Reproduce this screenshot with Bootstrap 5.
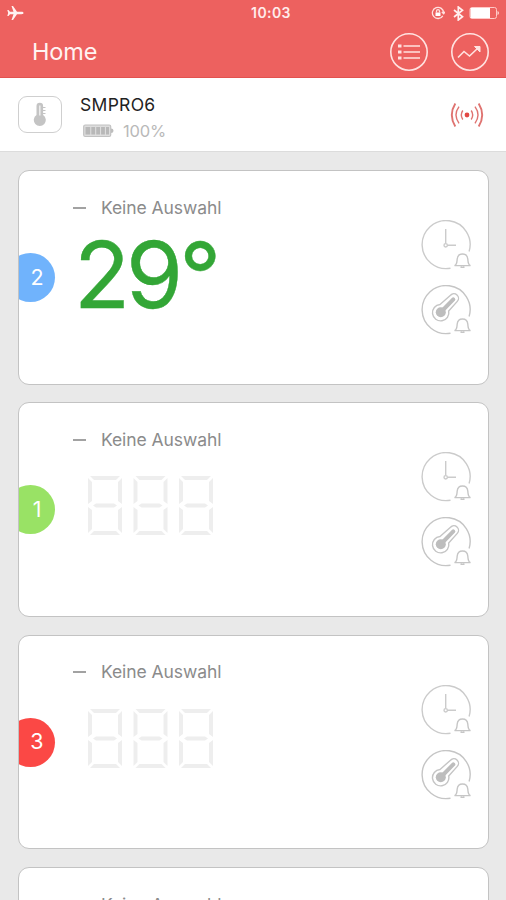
<!DOCTYPE html>
<html lang="de">
<head>
<meta charset="utf-8">
<meta name="viewport" content="width=device-width, initial-scale=1">
<title>Home</title>
<link href="https://cdn.jsdelivr.net/npm/bootstrap@5.3.0/dist/css/bootstrap.min.css" rel="stylesheet">
<style>
html,body{height:900px;overflow:hidden}
body{background:#e9e9e9;font-family:Inter,"Liberation Sans",sans-serif;line-height:1}
svg{display:block;flex:none}
.app-top{background:#ed615f;height:78px;color:#fff;border-bottom:1px solid #e2524f}
.status{height:26px;padding:0 7px}
.clock-text{font-size:14px;font-weight:600;letter-spacing:.4px;color:#ffeceb;padding-left:36px}
.app-bar{height:51px;padding:0 16px 0 32px}
.app-title{font-size:23.5px;letter-spacing:-.1px;color:#fff3f2;padding-top:2px}
.round-actions{gap:21px}
.device{height:74px;background:#fff;padding:0 22px 0 18px;border-bottom:1px solid #dcdcdc}
.device-icon{width:44px;height:37px;border:1.5px solid #cfcfcf;border-radius:9px}
.device-text{margin-left:18px;padding-top:6px}
.device-name{font-size:17.5px;letter-spacing:.3px;color:#222}
.device-level{font-size:16.5px;letter-spacing:-.2px;color:#b9b9b9;margin-top:9px}
.battery-full{margin:0 9px 0 3px}
.probes{height:748px;overflow:hidden;padding:18px 17px 0 18px;gap:17.8px}
.probe{height:214.5px;border:1.5px solid #c3c3c3;border-radius:11px;flex:none}
.probe-side{width:54px;padding-top:82px}
.probe-tag{width:49px;height:49px;margin-left:-13px;padding-left:13px;font-size:21.5px;color:#fff}
.tag-blue{background:#70b3fc}.tag-green{background:#99e265}.tag-red{background:#fb4845}
.probe-name{height:20px;margin-top:26.6px;gap:15px;font-size:17.5px;letter-spacing:-.08px;color:#8b8b8b}
.dash{width:13px;height:2px;background:#a2a2a2}
.reading{font-size:92px;letter-spacing:-4px;color:#33a636;margin:11px 0 0 1px;-webkit-text-stroke:.4px #33a636}
.segments{margin:26.500px 0 0 15px}
.probe-tools{gap:12px;padding:49px 15.5px 0 0}
</style>
<script src="https://cdn.jsdelivr.net/npm/bootstrap@5.3.0/dist/js/bootstrap.bundle.min.js"></script>
</head>
<body>
<svg width="0" height="0" class="position-absolute" aria-hidden="true">
  <defs>
    <g id="bell"><path d="M34.500 45.600c2.600-.9 2.400-3.600 2.700-6.600.3-3.300 2.300-5 5.300-5s5 1.700 5.300 5c.3 3 .1 5.700 2.700 6.600zM40.500 46.800q2 1.200 4 0" stroke="#c6c6c6"/></g>
    <g id="ring"><path d="M30.500 48.200A24 24 0 1 1 49.100 31.500"/></g>
    <symbol id="timer" viewBox="0 0 53 53"><g fill="none" stroke="#cbcbcb" stroke-width="1.400"><use href="#ring"/><path d="M25.700 9v14M28 25.300h8"/><circle cx="25.700" cy="25.300" r="1.700"/><use href="#bell"/></g></symbol>
    <symbol id="probe" viewBox="0 0 53 53"><g fill="none" stroke="#c5c5c5" stroke-width="1.400"><use href="#ring"/><path d="M20 19.500 30.500 10.200a4.600 4.600 0 0 1 6.800 6.200L28.700 26a8.200 8.200 0 1 1-8.700-6.500z"/><circle cx="20.800" cy="27.300" r="5" fill="#bdbdbd" stroke="none"/><path d="m21 27 12.300-12.600" stroke="#bdbdbd" stroke-width="4" stroke-linecap="round"/><use href="#bell"/></g></symbol>
    <g id="digit"><path d="M2 0h30l-4 4H6zM2 59h30l-4-4H6zM5 29.500l3-2h18l3 2-3 2H8zM0 2l4 4v19l-4 3zM34 2l-4 4v19l4 3zM0 57l4-4V34l-4-3zM34 57l-4-4V34l4-3z"/></g>
    <symbol id="blank" viewBox="0 0 126 60"><g fill="#eee"><use href="#digit"/><use href="#digit" x="45.500"/><use href="#digit" x="91"/></g></symbol>
  </defs>
</svg>

<header class="app-top">
  <div class="status d-flex align-items-center position-relative">
    <svg width="17" height="16" viewBox="0 0 17 16" fill="#fff2f1"><path d="M16.500 8c0-.8-.8-1.200-2-1.200H10L6 1H4.500l2 5.800H3L1.500 5H.3L1.200 8 .3 11h1.200L3 9.200h3.500l-2 5.800H6l4-5.800h4.500c1.200 0 2-.4 2-1.200z"/></svg>
    <span class="clock-text position-absolute start-50 translate-middle-x">10:03</span>
    <div class="d-flex align-items-center ms-auto">
      <svg width="14" height="14" viewBox="0 0 14 14" fill="none" stroke="#ffe1df" stroke-width="1.300"><path d="M11.800 9.800A5.600 5.600 0 1 1 12.600 7M10.800 6l1.900 1.800L14 5.700"/><path d="M5.500 6.500V5.200a1.500 1.500 0 0 1 3 0v1.300"/><path d="M4.500 6.500h5V10h-5z" fill="#fff" stroke="none"/></svg>
      <svg class="ms-2" width="11" height="15" viewBox="0 0 11 15" fill="none" stroke="#ffefee" stroke-width="1.700"><path d="m1 4 8.500 6.800L5.300 14V1l4.200 3.200L1 11"/></svg>
      <svg class="ms-1" width="31" height="14" viewBox="0 0 31 14"><rect x="2" y="1.500" width="26.500" height="11" rx="2" fill="none" stroke="#ffc9c7"/><path d="M2.500 2h19.500v10H2.500z" fill="#fff"/><path d="M29.500 5v4q1.500-.5 1.500-2t-1.500-2z" fill="#ffd5d3"/></svg>
    </div>
  </div>
  <div class="app-bar d-flex align-items-center justify-content-between">
    <h1 class="app-title fw-normal mb-0">Home</h1>
    <div class="round-actions d-flex">
      <svg width="40" height="40" viewBox="0 0 40 40" fill="none" stroke="#ffe2e0" stroke-width="1.600"><circle cx="20" cy="20" r="18.200"/><path d="M14.500 14H31M14.500 20H31M14.500 26H31"/><path d="M9 14h3.500M9 20h3.500M9 26h3.500" stroke-width="2.800"/></svg>
      <svg width="40" height="40" viewBox="0 0 40 40" fill="none" stroke="#ffe2e0" stroke-width="1.600"><circle cx="20" cy="20" r="18.200"/><path d="m8 25.500 6-6 5.500 4.500 8-7.500"/><path d="M24.500 14.500H30V20z" fill="#ffe2e0" stroke-width="1"/></svg>
    </div>
  </div>
</header>

<section class="device d-flex align-items-center">
  <div class="device-icon d-flex align-items-center justify-content-center">
    <svg width="16" height="25" viewBox="0 0 16 25"><path d="M4.500 13V4a3.300 3.300 0 0 1 6.600 0v9a6 6 0 1 1-6.600 0z" fill="#c4c4c4"/><path d="M7.800 3.500v10" stroke="#eee" stroke-width="1.500"/><path d="M11 5.500h2.500M11 8.500h2.500M11 11.500h2.500" stroke="#c4c4c4"/></svg>
  </div>
  <div class="device-text">
    <div class="device-name">SMPRO6</div>
    <div class="device-level d-flex align-items-center">
      <svg class="battery-full" width="31" height="14" viewBox="0 0 31 14"><rect x=".7" y="1" width="27" height="11.500" rx="1.500" fill="#ddd" stroke="#c2c2c2" stroke-width="1.200"/><path d="M2.500 3h4.700v7.500H2.500zM8.300 3h3.800v7.500H8.300zM13.200 3H17v7.500h-3.800zM18.100 3h3.800v7.500h-3.800zM23 3h3v7.500h-3z" fill="#b8b8b8"/><path d="M28 4.500q2.500 0 2.500 2.200T28 9z" fill="#bdbdbd"/></svg>
      100%
    </div>
  </div>
  <svg class="ms-auto" width="34" height="28" viewBox="0 0 34 28" fill="none" stroke="#df7370"><circle cx="17" cy="14" r="2.400" fill="#e34743" stroke="none"/><path stroke-width="1.400" d="M12.800 9.500q-3 4.500 0 9M21.200 9.500q3 4.500 0 9M9 5.700q-6 8.300 0 16.600M25 5.700q6 8.300 0 16.600"/><path stroke-width="1.900" d="M5.300 2.500q-7 11.500 0 23M28.700 2.500q7 11.500 0 23"/></svg>
</section>

<main class="probes d-flex flex-column">
  <article class="probe bg-white overflow-hidden d-flex">
    <div class="probe-side"><div class="probe-tag tag-blue rounded-circle d-flex align-items-center justify-content-center">2</div></div>
    <div class="flex-grow-1">
      <div class="probe-name d-flex align-items-center"><span class="dash"></span><span>Keine Auswahl</span></div>
      <div class="reading">29°</div>
    </div>
    <div class="probe-tools d-flex flex-column"><svg width="53" height="53"><use href="#timer"/></svg><svg width="53" height="53"><use href="#probe"/></svg></div>
  </article>
  <article class="probe bg-white overflow-hidden d-flex">
    <div class="probe-side"><div class="probe-tag tag-green rounded-circle d-flex align-items-center justify-content-center">1</div></div>
    <div class="flex-grow-1">
      <div class="probe-name d-flex align-items-center"><span class="dash"></span><span>Keine Auswahl</span></div>
      <svg class="segments" width="126" height="60"><use href="#blank"/></svg>
    </div>
    <div class="probe-tools d-flex flex-column"><svg width="53" height="53"><use href="#timer"/></svg><svg width="53" height="53"><use href="#probe"/></svg></div>
  </article>
  <article class="probe bg-white overflow-hidden d-flex">
    <div class="probe-side"><div class="probe-tag tag-red rounded-circle d-flex align-items-center justify-content-center">3</div></div>
    <div class="flex-grow-1">
      <div class="probe-name d-flex align-items-center"><span class="dash"></span><span>Keine Auswahl</span></div>
      <svg class="segments" width="126" height="60"><use href="#blank"/></svg>
    </div>
    <div class="probe-tools d-flex flex-column"><svg width="53" height="53"><use href="#timer"/></svg><svg width="53" height="53"><use href="#probe"/></svg></div>
  </article>
  <article class="probe bg-white overflow-hidden d-flex">
    <div class="probe-side"></div>
    <div class="flex-grow-1">
      <div class="probe-name d-flex align-items-center"><span class="dash"></span><span>Keine Auswahl</span></div>
    </div>
  </article>
</main>
</body>
</html>
